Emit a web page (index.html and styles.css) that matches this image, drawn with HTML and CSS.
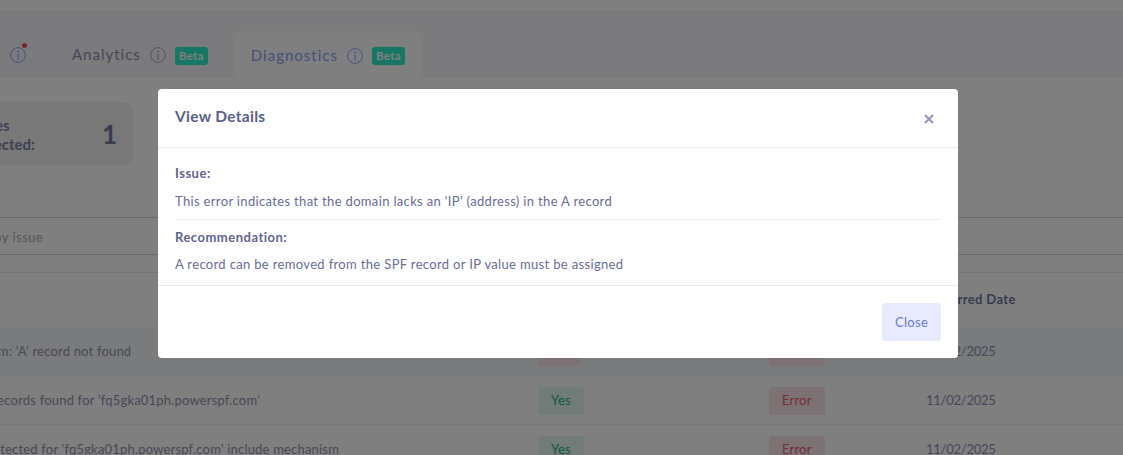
FILE: index.html
```html
<!DOCTYPE html>
<html lang="en">
<head>
<meta charset="utf-8">
<title>Diagnostics</title>
<link rel="stylesheet" href="styles.css">
</head>
<body>
<div class="page">
  <div class="topbar"></div>
  <div class="tabs">
    <div class="tab tab-first">
      <span class="tab-label">Report</span>
      <span class="info info-blue">
        <svg viewBox="0 0 16 16" width="16" height="16"><circle cx="8" cy="8" r="7.4" fill="none" stroke="currentColor"/><circle cx="8.2" cy="4.4" r=".9" fill="currentColor"/><path d="M8.2 6.8v5.6" fill="none" stroke="currentColor" stroke-width="1.2"/></svg>
        <i class="dot"></i>
      </span>
    </div>
    <div class="tab">
      <span class="tab-label">Analytics</span>
      <span class="info info-grey">
        <svg viewBox="0 0 16 16" width="16" height="16"><circle cx="8" cy="8" r="7.4" fill="none" stroke="currentColor"/><circle cx="8.2" cy="4.4" r=".9" fill="currentColor"/><path d="M8.2 6.8v5.6" fill="none" stroke="currentColor" stroke-width="1.2"/></svg>
      </span>
      <span class="beta">Beta</span>
    </div>
    <div class="tab tab-active">
      <span class="tab-label">Diagnostics</span>
      <span class="info info-blue">
        <svg viewBox="0 0 16 16" width="16" height="16"><circle cx="8" cy="8" r="7.4" fill="none" stroke="currentColor"/><circle cx="8.2" cy="4.4" r=".9" fill="currentColor"/><path d="M8.2 6.8v5.6" fill="none" stroke="currentColor" stroke-width="1.2"/></svg>
      </span>
      <span class="beta">Beta</span>
    </div>
  </div>
  <div class="content">
    <div class="stat">
      <div class="stat-label">Issues<br>Detected:</div>
      <div class="stat-value">1</div>
    </div>
    <div class="search">Search by issue</div>
    <div class="table">
      <div class="row head">
        <div class="c-issue">Issue</div>
        <div class="c-fixed">Fixed</div>
        <div class="c-type">Type</div>
        <div class="c-date">Occurred Date</div>
      </div>
      <div class="row tint">
        <div class="c-issue">Problem: 'A' record not found</div>
        <div class="c-fixed"><span class="pill pill-red">No</span></div>
        <div class="c-type"><span class="pill pill-red">Error</span></div>
        <div class="c-date">11/02/2025</div>
      </div>
      <div class="row">
        <div class="c-issue">No A records found for 'fq5gka01ph.powerspf.com'</div>
        <div class="c-fixed"><span class="pill pill-green">Yes</span></div>
        <div class="c-type"><span class="pill pill-red">Error</span></div>
        <div class="c-date">11/02/2025</div>
      </div>
      <div class="row">
        <div class="c-issue">Not detected for 'fq5gka01ph.powerspf.com' include mechanism</div>
        <div class="c-fixed"><span class="pill pill-green">Yes</span></div>
        <div class="c-type"><span class="pill pill-red">Error</span></div>
        <div class="c-date">11/02/2025</div>
      </div>
    </div>
  </div>
</div>
<div class="overlay">
  <div class="modal">
    <div class="modal-head">
      <h2 class="modal-title">View Details</h2>
      <svg class="modal-x" viewBox="0 0 10 10" width="10" height="10"><path d="M1 1l8 8M9 1l-8 8" fill="none" stroke="currentColor" stroke-width="2"/></svg>
    </div>
    <div class="modal-body">
      <div class="block block-first">
        <div class="label">Issue:</div>
        <p class="text">This error indicates that the domain lacks an 'IP' (address) in the A record</p>
      </div>
      <div class="block">
        <div class="label">Recommendation:</div>
        <p class="text">A record can be removed from the SPF record or IP value must be assigned</p>
      </div>
    </div>
    <div class="modal-foot">
      <button class="close-btn" type="button">Close</button>
    </div>
  </div>
</div>
</body>
</html>
```
FILE: styles.css
```css
* { box-sizing: border-box; }
html, body { margin: 0; height: 100%; overflow: hidden; }
body { font-family: "Lato", "Noto Sans", sans-serif; background: #fff; color: #888cbe; font-size: 13px; }
.page { height: 455px; overflow: hidden; }
.topbar { height: 10px; background: #fefefe; }
.tabs { height: 68px; background: #f6f7fa; display: flex; align-items: flex-end; margin-left: -44px; gap: 11px; }
.tab { height: 47px; padding: 0 16px 2px; display: flex; align-items: center; gap: 9px; color: #8c8eae; font-size: 15px; letter-spacing: 1px; border-radius: 4px 4px 0 0; }
.tab-first { width: 86px; margin-right: 3px; justify-content: flex-end; }
.tab-active { background: #fff; color: #8a9cf6; padding-bottom: 0; }
.info { position: relative; display: flex; width: 16px; height: 16px; margin-top: 2px; }
.info-blue { color: #8aa2ff; }
.info-grey { color: #a8aab8; }
.dot { position: absolute; top: -4px; right: -1px; width: 5px; height: 5px; border-radius: 50%; background: #f0495e; }
.beta { width: 33px; text-align: center; background: #2aeec8; color: #fff; font-size: 11.5px; font-weight: 700; letter-spacing: .3px; height: 18px; line-height: 18px; border-radius: 3px; margin-top: 4px; }
.tab-active .beta { margin-top: 2px; }
.content { margin-left: -40px; }
.stat { width: 173px; height: 64px; margin-top: 24px; padding: 0 16px 0 9px; background: #f0f0f3; border-radius: 10px; display: flex; align-items: center; justify-content: space-between; color: #7c80a4; font-weight: 700; font-size: 15px; line-height: 19px; }
.stat-label { margin-top: 2px; }
.stat-value { font-size: 26px; color: #72769e; font-weight: 700; }
.search { margin-top: 51px; height: 38px; line-height: 38px; border-top: 1px solid #d0d0d4; border-bottom: 1px solid #d0d0d4; color: #a9abb8; font-size: 13px; letter-spacing: .5px; text-indent: -11px; width: 1300px; }
.table { margin-top: 17px; border-top: 1px solid #e6e6ea; width: 1300px; }
.row { display: flex; height: 49px; align-items: center; border-bottom: 1px solid #eaeef8; letter-spacing: .19px; color: #8f91ab; }
.head { height: 54px; padding-bottom: 2px; font-weight: 700; color: #70749e; letter-spacing: .35px; border-bottom: 0; }
.tint { background: #f4f6fb; }
.c-issue { width: 578px; white-space: nowrap; overflow: hidden; }
.c-fixed { width: 231px; }
.c-type { width: 157px; }
.row:not(.head) .c-date { letter-spacing: -.25px; color: #8890b4; }
.pill { display: inline-block; height: 28px; line-height: 26px; margin-top: 2px; padding: 0 13px; border-radius: 4px; }
.pill-green { background: #e2f6ee; color: #1fae8e; }
.pill-red { background: #f8e4e7; color: #ec5a68; }
.overlay { position: fixed; inset: 0; background: rgba(0,0,0,.5); padding: 89px 0 0 158px; }
.modal { width: 800px; height: 269px; background: #fff; border-radius: 4px; color: #656a93; display: flex; flex-direction: column; }
.modal-head { height: 59px; flex: none; border-bottom: 1px solid #e9ebf0; display: flex; align-items: center; justify-content: space-between; padding: 0 24px 0 17px; }
.modal-title { margin: 0; font-size: 15.5px; font-weight: 700; color: #5a5f8a; letter-spacing: .3px; position: relative; top: -2px; }
.modal-x { color: #9296bc; position: relative; top: 1px; }
.modal-body { padding: 0 17px; flex: none; height: 138px; border-bottom: 1px solid #e9ebf0; }
.block { border-top: 1px solid #e9ebf0; }
.block-first { border-top: 0; height: 71px; padding-top: 16px; }
.label { font-size: 13px; font-weight: 700; color: #5f648f; line-height: 18px; letter-spacing: .5px; margin-top: 8px; }
.block-first .label { margin-top: 0; }
.text { margin: 9px 0 0; font-size: 13px; line-height: 18px; color: #686d97; letter-spacing: .34px; }
.block-first .text { margin-top: 10px; }
.modal-foot { flex: 1; display: flex; justify-content: flex-end; align-items: flex-start; padding: 17px 17px 0 0; }
.close-btn { width: 59px; height: 38px; border: 0; border-radius: 4px; background: #e8ebfd; color: #6b77dc; font: inherit; font-size: 13px; letter-spacing: .3px; }
```
